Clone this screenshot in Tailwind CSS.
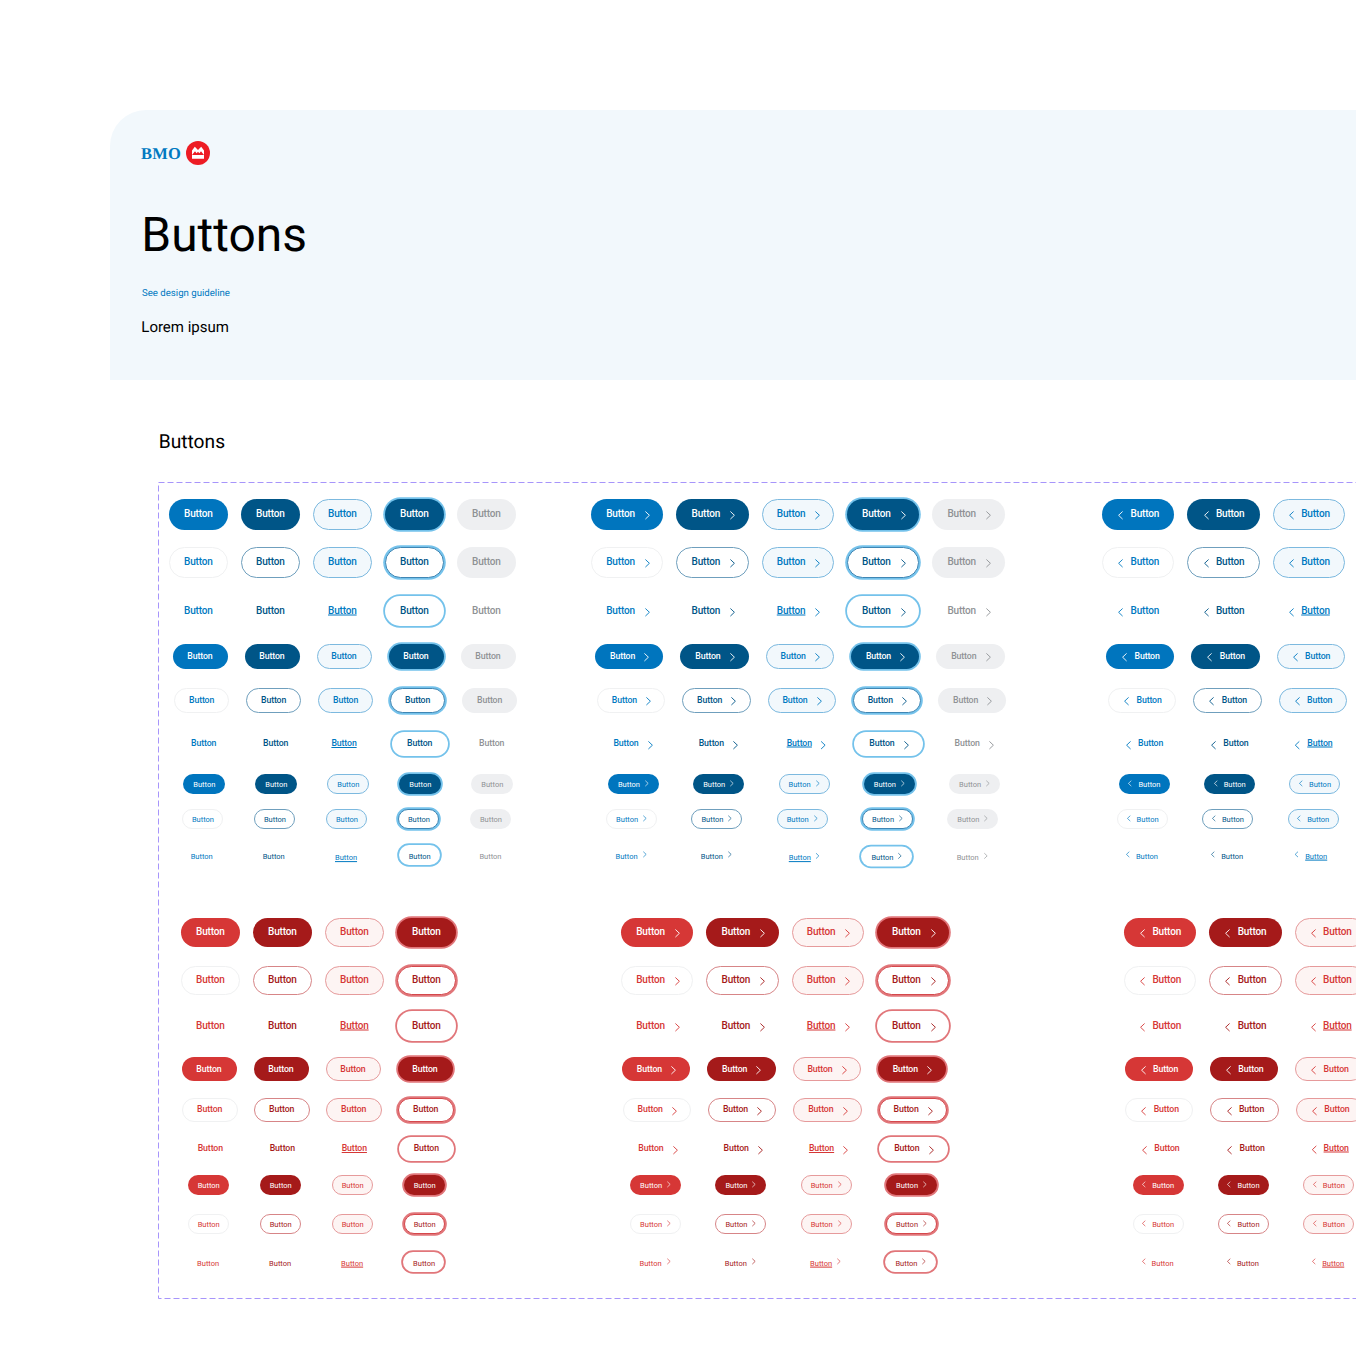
<!DOCTYPE html>
<html lang="en">
<head>
    <meta charset="UTF-8">
    <meta name="viewport" content="width=device-width, initial-scale=1.0">
    <title>BMO - Buttons</title>
    <script src="https://cdn.jsdelivr.net/npm/@tailwindcss/browser@4"></script>
</head>
<body class="bg-white overflow-hidden font-['Roboto',sans-serif] [text-rendering:geometricPrecision]">
    <div class="w-[1356px] h-[1356px] overflow-hidden pt-[110px]">

        <!-- Header -->
        <header class="ml-[110px] h-[270px] bg-[#f2f8fc] rounded-tl-[36px] pl-[31px] pt-[30px]">
            <div class="flex items-center gap-[5px] h-[26px]">
                <span class="w-[40px] pt-px text-[16.5px] leading-[26px] tracking-[0.2px] font-bold text-[#0079c1] font-['Liberation_Serif',serif]">BMO</span>
                <svg class="w-[24px] h-[24px]" viewBox="0 0 24 24">
                    <circle cx="12" cy="12" r="12" fill="#ed1c24"/>
                    <path d="M6 17.8V9.6L8.8 5.7 12 9l3.2-3.3L18 9.6v8.2z" fill="#fff"/>
                    <path d="M6 13.9L9 10.3l1.6 1.9 1.4-1.4 1.4 1.4L15 10.3l3 3.6z" fill="#ed1c24"/>
                </svg>
            </div>
            <h1 class="mt-[41px] ml-[0.3px] text-[47.9px] leading-[56px] text-black">Buttons</h1>
            <a class="block mt-[24px] ml-[1px] text-[9.65px] leading-[14px] text-[#0079c1]">See design guideline</a>
            <p class="mt-[16px] ml-[0.3px] text-[15px] leading-[20px] text-black">Lorem ipsum</p>
        </header>

        <h2 class="mt-[50px] ml-[158.7px] h-[24px] text-[19.2px] leading-[24px] text-black">Buttons</h2>

        <!-- Component set -->
        <main class="relative mt-[28px] ml-[158px] w-[1300px] h-[817px]">
            <svg class="absolute inset-0 w-full h-full" fill="none" stroke="#a795fb">
                <rect x="0.5" y="0.5" width="1290" height="816" stroke-dasharray="6 3"/>
            </svg>
            <div id="buttonSet" class="relative"></div>
        </main>
    </div>

    <script>
        // Text size, metrics and icon size for each button size
        const sizes = {
            lg: { text: 'text-[10px] tracking-[-0.17px] font-medium', w: 58.7, wIcon: 72.3, textX: 15, iconX: 53.7, leftIconX: 16.1, leftTextX: 28.4, textDy: -1.2, iconDy: 1.1, iw: 5, ih: 8.4 },
            md: { text: 'text-[8.75px] tracking-[-0.12px] font-medium', w: 55.3, wIcon: 68.3, textX: 14.8, iconX: 49.2, leftIconX: 16.2, leftTextX: 28.5, textDy: -0.5, iconDy: 1, iw: 5, ih: 8.4 },
            sm: { text: 'text-[7.5px] font-normal', w: 41.3, wIcon: 51, textX: 9.9, iconX: 37, leftIconX: 9.6, leftTextX: 19.6, textDy: 0.6, iconDy: -0.6, iw: 3.6, ih: 6 }
        };

        const styles = {
            blue: {
                solid: [
                    'bg-[#0075be] text-white',
                    'bg-[#005587] text-white',
                    'bg-[#f2f8fc] text-[#0079c1] border border-[#7cb9df]',
                    'bg-[#005587] text-white ring-[1.8px] ring-[#74c2eb]',
                    'bg-[#eeeff1] text-[#8f9295]'
                ],
                outline: [
                    'bg-white text-[#0079c1] border border-[#f0f1f2]',
                    'bg-white text-[#005587] border border-[#6f9fbd]',
                    'bg-[#f2f8fc] text-[#0079c1] border border-[#7cb9df]',
                    'bg-white text-[#005587] border border-[#3f86b4] ring-[1.8px] ring-[#74c2eb]',
                    'bg-[#eeeff1] text-[#8f9295]'
                ],
                text: [
                    'text-[#0079c1]',
                    'text-[#005587]',
                    'text-[#0079c1] underline underline-offset-1',
                    'text-[#005587] ring-[1.8px] ring-[#74c2eb]',
                    'text-[#8f9295]'
                ]
            },
            red: {
                solid: [
                    'bg-[#d63736] text-white',
                    'bg-[#a51a1a] text-white',
                    'bg-[#fdf4f3] text-[#d63736] border border-[#e69a9b]',
                    'bg-[#a51a1a] text-white ring-[1.8px] ring-[#e1767a]'
                ],
                outline: [
                    'bg-white text-[#d63736] border border-[#f0f1f2]',
                    'bg-white text-[#a51a1a] border border-[#d78587]',
                    'bg-[#fdf4f3] text-[#d63736] border border-[#e69a9b]',
                    'bg-white text-[#a51a1a] border border-[#d5484c] ring-[1.8px] ring-[#e1767a]'
                ],
                text: [
                    'text-[#d63736]',
                    'text-[#a51a1a]',
                    'text-[#d63736] underline underline-offset-1',
                    'text-[#a51a1a] ring-[1.8px] ring-[#e1767a]'
                ]
            }
        };

        // y and h place the row; x is the first button of the plain, right icon and
        // left icon strips; ty shifts the labels; nudge holds [dx, dy] for single
        // buttons of a strip
        const rows = [
            { color: 'blue', kind: 'solid', size: 'lg', y: 499, h: 31, x: [169, 591.2, 1102.2] },
            { color: 'blue', kind: 'outline', size: 'lg', y: 547, h: 31, x: [169, 591.2, 1102.2] },
            { color: 'blue', kind: 'text', size: 'lg', y: 596, h: 30, ty: 0.7, x: [169, 591.2, 1102.2] },
            { color: 'blue', kind: 'solid', size: 'md', y: 644.4, h: 24.4, x: [172.5, 595.2, 1106] },
            { color: 'blue', kind: 'outline', size: 'md', y: 688.4, h: 24.4, x: [174.2, 597, 1108] },
            { color: 'blue', kind: 'text', size: 'md', y: 731.6, h: 24.4, x: [176.3, 598.6, 1109.5], nudge: [{ 2: [-3.7, 0.5] }, { 2: [2.7, 0] }, { 2: [-1.3, 0] }] },
            { color: 'blue', kind: 'solid', size: 'sm', y: 774, h: 20, x: [183.4, 608, 1118.8] },
            { color: 'blue', kind: 'outline', size: 'sm', y: 809.4, h: 20, ty: -0.5, x: [182, 606.2, 1117] },
            { color: 'blue', kind: 'text', size: 'sm', y: 845.5, h: 20, x: [180.8, 605.6, 1116.3], nudge: [{ 2: [0.3, 1.5], 3: [2, 0], 4: [0.7, 0] }, { 2: [2.7, 1.5], 3: [0, 1.5], 4: [0, 1.5] }, { 2: [-1.3, 0] }] },
            { color: 'red', kind: 'solid', size: 'lg', y: 918, h: 29, ty: 0.7, x: [181, 621.2, 1124] },
            { color: 'red', kind: 'outline', size: 'lg', y: 966, h: 29, ty: 0.7, x: [181, 621.2, 1124] },
            { color: 'red', kind: 'text', size: 'lg', y: 1011, h: 30, ty: 0.7, x: [181, 621.2, 1124] },
            { color: 'red', kind: 'solid', size: 'md', y: 1057, h: 24, x: [181.5, 622, 1124.5] },
            { color: 'red', kind: 'outline', size: 'md', y: 1098, h: 24, ty: -0.4, x: [182.3, 622.8, 1125.2] },
            { color: 'red', kind: 'text', size: 'md', y: 1137, h: 24, ty: -0.5, x: [182.9, 623.5, 1125.8], nudge: [{}, {}, { 2: [-1.3, -0.5] }] },
            { color: 'red', kind: 'solid', size: 'sm', y: 1175.4, h: 20, ty: -0.2, x: [187.8, 630.2, 1132.6] },
            { color: 'red', kind: 'outline', size: 'sm', y: 1214.2, h: 20, x: [187.8, 630.2, 1132.6] },
            { color: 'red', kind: 'text', size: 'sm', y: 1252.5, h: 20, x: [187.2, 629.6, 1132] }
        ];

        const FRAME_Y = 482;
        const stripStart = [158, 580, 1090];
        const stripWidth = [422, 510, 266];
        const pitch = [72, 85.3, 85.3];

        function chevron(s, left) {
            const points = left ? '4.6,0.4 0.6,4.2 4.6,8' : '0.4,0.4 4.4,4.2 0.4,8';
            return `<svg class="shrink-0 overflow-visible" style="width:${s.iw}px;height:${s.ih}px;transform:translateY(${s.iconDy}px)" viewBox="0 0 5 8.4" preserveAspectRatio="none" fill="none" stroke="currentColor" stroke-width="0.9"><polyline points="${points}"/></svg>`;
        }

        function button(row, strip, i) {
            const s = sizes[row.size];
            const border = styles[row.color][row.kind][i].includes('border ') ? 1 : 0;
            const [dx, dy] = ((row.nudge || [])[strip] || {})[i] || [0, 0];
            const pad = (strip === 2 ? s.leftIconX : s.textX) - border;
            const shift = s.textDy + (row.ty || 0);
            const width = strip === 1 ? `width:${s.iconX - s.textX}px;` : '';
            const label = `<span class="shrink-0 whitespace-nowrap text-left" style="${width}transform:translateY(${shift}px)">Button</span>`;
            let content = label;
            if (strip === 1) content = label + chevron(s, false);
            if (strip === 2) content = chevron(s, true) + `<span class="shrink-0" style="width:${s.leftTextX - s.leftIconX - s.iw}px"></span>` + label;
            return `<div class="shrink-0" style="width:${pitch[strip]}px">
                <button class="flex items-center rounded-full leading-none ${s.text} ${styles[row.color][row.kind][i]}" style="width:${strip ? s.wIcon : s.w}px;height:${row.h}px;padding-left:${pad}px;transform:translate(${dx}px,${dy}px)">${content}</button>
            </div>`;
        }

        let bottom = FRAME_Y;
        document.getElementById('buttonSet').innerHTML = rows.map(row => {
            const gap = row.y - bottom;
            bottom = row.y + row.h;
            const strips = row.x.map((x, strip) => {
                // the left icon strip runs off the page after three buttons
                const states = strip === 2 ? styles[row.color][row.kind].slice(0, 3) : styles[row.color][row.kind];
                const cells = states.map((_, i) => button(row, strip, i)).join('');
                return `<div class="flex shrink-0" style="width:${stripWidth[strip]}px;padding-left:${x - stripStart[strip]}px">${cells}</div>`;
            }).join('');
            return `<div class="flex" style="padding-top:${gap}px">${strips}</div>`;
        }).join('');
    </script>
</body>
</html>
